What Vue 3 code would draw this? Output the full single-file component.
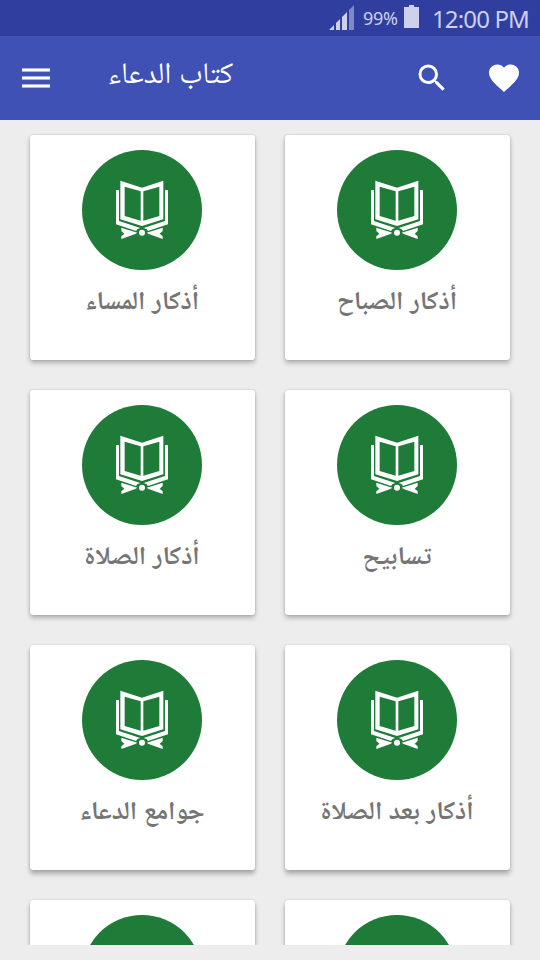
<script setup>
const cards = [
  'أذكار المساء',
  'أذكار الصباح',
  'أذكار الصلاة',
  'تسابيح',
  'جوامع الدعاء',
  'أذكار بعد الصلاة',
  '',
  '',
]
</script>

<template>
  <div class="screen">
    <div class="status">
      <svg class="signal" width="26" height="26" viewBox="0 0 26 26">
        <path d="M0 25L5 20V25ZM7 18L11 14V25H7ZM13 12L18 7V25H13Z" fill="#cdd1ec" />
        <path d="M20 5L25 0V25H20Z" fill="#8089c8" />
      </svg>
      <span class="percent">99%</span>
      <svg class="battery" width="15" height="23" viewBox="0 0 15 23">
        <path d="M5 0H10V2H15V23H0V2H5Z" fill="#cdd1ec" />
      </svg>
      <span class="clock">12:00 PM</span>
    </div>
    <header class="bar">
      <div class="menu"><i></i><i></i><i></i></div>
      <h1 class="title" dir="rtl">كتاب الدعاء</h1>
      <svg class="search" width="36" height="36" viewBox="0 0 24 24">
        <path fill="#fff" d="M15.5 14h-.79l-.28-.27A6.47 6.47 0 0 0 16 9.5 6.5 6.5 0 1 0 9.5 16c1.61 0 3.09-.59 4.23-1.57l.27.28v.79l5 4.99L20.49 19l-4.99-5zm-6 0C7.01 14 5 11.99 5 9.500S7.010 5 9.500 5 14 7.010 14 9.500 11.990 14 9.500 14z" />
      </svg>
      <svg class="heart" width="36" height="36" viewBox="0 0 24 24">
        <path fill="#fff" d="M12 21.350l-1.450-1.320C5.400 15.360 2 12.280 2 8.500 2 5.420 4.420 3 7.500 3c1.740 0 3.410.810 4.500 2.090C13.090 3.810 14.760 3 16.500 3 19.580 3 22 5.420 22 8.500c0 3.780-3.400 6.860-8.550 11.540L12 21.350z" />
      </svg>
    </header>
    <main class="list">
      <div v-for="(label, i) in cards" :key="i" class="card">
        <svg width="120" height="120" viewBox="6 6 360 360">
          <circle cx="186" cy="186" r="180" fill="#1e7b38" />
          <path fill="#fff" fill-rule="evenodd" d="M121 98L186 119L250 98V214L186 234L121 214ZM134 116V204L182 218V130ZM190 130V218L238 204V116Z" />
          <path fill="#fff" d="M108 126H117V219L181 240Q171 241 168 249L108 229ZM264 126H255V219L191 240Q201 241 204 249L264 229Z" />
          <circle cx="186" cy="254" r="9" fill="#fff" />
          <path fill="#fff" d="M124 239L172 254L166 258L124 273V265L133 257L124 249ZM248 239L200 254L206 258L248 273V265L239 257L248 249Z" />
        </svg>
        <p dir="rtl">{{ label }}</p>
      </div>
    </main>
  </div>
</template>

<style>
body { margin: 0; background: #ededed; }
</style>

<style scoped>
.screen { width: 540px; height: 960px; overflow: hidden; background: #ededed; font-family: "Noto Sans", "Noto Naskh Arabic", "DejaVu Sans", sans-serif; }
.status { box-sizing: border-box; height: 36px; background: #303f9f; color: #cdd1ec; display: flex; align-items: flex-start; padding: 5px 12px 0 329px; white-space: nowrap; }
.signal { flex: none; }
.percent { font: 18px/27px "Noto Sans", sans-serif; width: 36px; margin-left: 8px; letter-spacing: -0.300px; }
.battery { flex: none; margin-left: 5px; }
.clock { font: 24px/27px "Noto Sans", sans-serif; margin-left: auto; margin-right: -1px; letter-spacing: -0.850px; }
.bar { box-sizing: border-box; height: 84px; background: #3f51b5; display: flex; align-items: center; padding: 0 18px 0 22px; }
.menu { width: 28px; display: grid; gap: 4px; }
.menu i { height: 4px; background: linear-gradient(#aab2dd 0 1px, #fff 1px 3px, #aab2dd 3px); }
.title { margin: 0 0 12px 58px; width: 125px; display: flex; justify-content: center; color: #fff; font-weight: 400; font-size: 30px; line-height: 36px; white-space: nowrap; }
.search { margin-left: auto; }
.heart { margin-left: 36px; }
.list { height: 825px; overflow: hidden; box-sizing: border-box; padding: 15px 30px 0; display: grid; grid-template-columns: 225px 225px; grid-auto-rows: 225px; gap: 30px; }
.card { box-sizing: border-box; background: #fff; border-radius: 3px; box-shadow: 0 3px 5px rgba(0, 0, 0, .26), 0 0 2px rgba(0, 0, 0, .18); display: flex; flex-direction: column; align-items: center; padding: 15px 1px 0 0; }
.card:nth-child(n+5) { box-shadow: 0 4px 5px rgba(0, 0, 0, .28), 0 0 2px rgba(0, 0, 0, .18); }
.card svg { flex: none; }
.card p { margin: 12px 0 0; height: 36px; color: #757575; font-weight: 700; font-size: 25.7px; line-height: 36px; white-space: nowrap; }
</style>
